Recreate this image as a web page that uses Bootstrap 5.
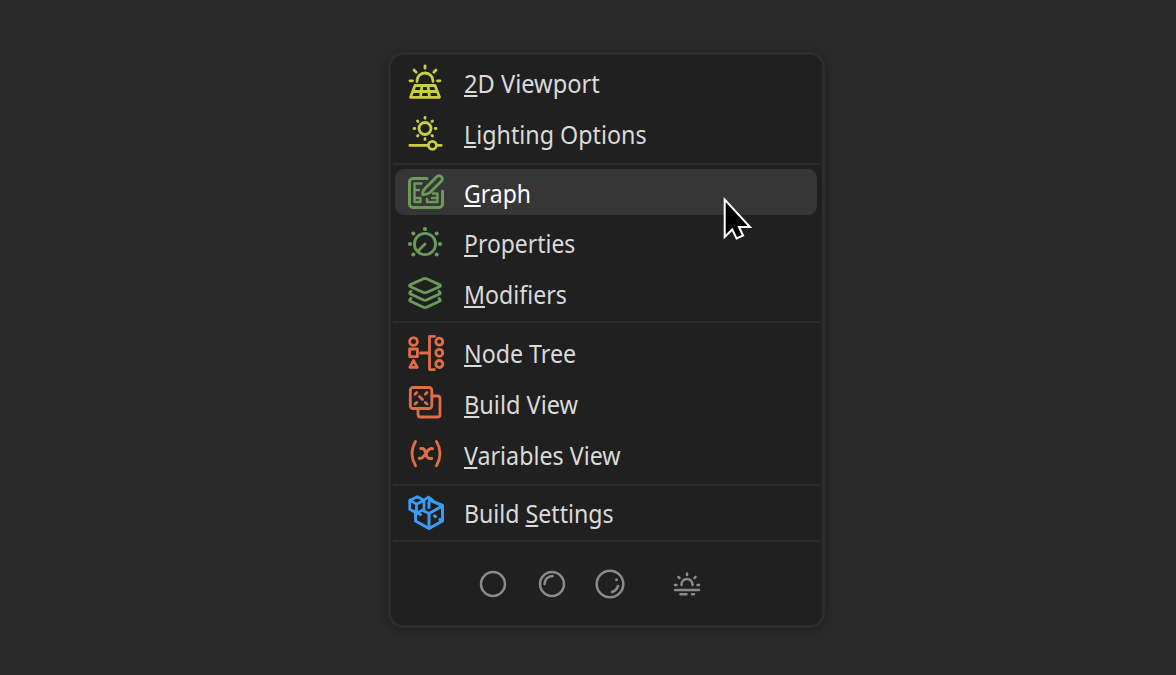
<!DOCTYPE html>
<html lang="en" data-bs-theme="dark">
<head>
<meta charset="utf-8">
<meta name="viewport" content="width=device-width, initial-scale=1">
<title>View menu</title>
<link href="https://cdn.jsdelivr.net/npm/bootstrap@5.3.0/dist/css/bootstrap.min.css" rel="stylesheet">
<style>
body{background:#2a2a2a;font-family:"Noto Sans","Open Sans",sans-serif;height:675px;overflow:hidden}
.stage{padding:52px 0 0 388px}
.panel-menu{width:437px;height:576px;background:#202020;border:3px solid #2d2d2d;border-radius:15px;box-shadow:0 2px 9px rgba(0,0,0,.25);padding-top:2px}
.entry{height:46px;margin:2.35px 5px 2.35px 3.500px;border-radius:9px;color:#dadada;font-size:25.4px;line-height:46px;padding-left:10px}
.entry-group{display:flow-root}
.entry-group .entry+.entry{margin-top:4.7px}
.entry.active{background:#363636;color:#fff}
.entry svg{width:40px;height:40px;flex:none;margin-top:1px}
.caption{margin-left:19px;transform-origin:0 50%;position:relative;top:1px}
.caption u{text-decoration-thickness:1.5px;text-underline-offset:1.500px;text-decoration-skip-ink:none}
.rule{height:2px;background:#2b2b2b;margin:4.500px 2px 1.500px}
.rule-b{margin-top:3px;margin-bottom:3.500px}
.rule-c{margin-top:4.500px;margin-bottom:1.500px}
.rule-d{margin-top:2.500px;margin-bottom:0}
.ic{fill:none;stroke:currentColor;stroke-width:2.8;stroke-linecap:round;stroke-linejoin:round}
.c-yellow{color:#c8cf43}.c-green{color:#6b9b58}.c-orange{color:#dd6e47}.c-blue{color:#3b9cf5}
.shades{height:83px;padding-left:85px;gap:24.500px;color:#8b8b8b}
.shades svg{width:34px;height:34px;stroke-width:2.5}
.shades svg:last-child{margin-left:18.300px}
.pointer{position:absolute;left:720px;top:194px}
</style>
</head>
<body>
<main class="stage">
<nav class="panel-menu">
<div class="entry-group">
<div class="entry d-flex align-items-center"><svg class="ic c-yellow" viewBox="0 0 40 40"><path d="M12 18.500v-.5a8 8 0 0 1 16 0v.5M20 2.800v2.400M9 7l2.200 2.200M31 7l-2.200 2.200M5 17.800h2.500M32.500 17.800H35M10 22.500h20l4.500 11.800h-29zM8 28.500h24M17 22.500 15.500 34.300M23 22.500 24.500 34.300"/></svg><span class="caption" data-w="136"><u>2</u>D Viewport</span></div>
<div class="entry d-flex align-items-center"><svg class="ic c-yellow" viewBox="0 0 40 40"><circle cx="20" cy="14.500" r="6"/><path d="M20 3.500v.8M20 24.700v.8M9 14.500h.8M30.200 14.500h.8M12.500 7l.5.5M27.500 7l-.5.5M12.500 22l.5-.5M27.500 22l-.5-.5M4.800 31.300h18M32 31.300h4.300"/><circle cx="27.400" cy="31.300" r="4"/></svg><span class="caption" data-w="182.500"><u>L</u>ighting Options</span></div>
</div>
<div class="rule"></div>
<div class="entry-group">
<div class="entry active d-flex align-items-center"><svg class="ic c-green" viewBox="0 0 40 40"><path d="M22 6.500H8a3.500 3.500 0 0 0-3.500 3.500v22A3.500 3.500 0 0 0 8 35.500h26a3.500 3.500 0 0 0 3.500-3.500V19" stroke-width="3"/><path d="M17.500 22.500c0-3 1-4.500 3-6.500L32 4.500a3.200 3.200 0 0 1 4.500 4.500L25 20.500c-2 1.600-4 2.300-7.500 2z"/><path d="M16.500 11.500h-7v18.500h6v-4h-6M9.500 18h4.500M32.500 21.500V30H22v-3M28 21.500h4.500M27 26h5.500" stroke-width="2.400"/></svg><span class="caption" data-w="67"><u>G</u>raph</span></div>
<div class="entry d-flex align-items-center"><svg class="ic c-green" viewBox="0 0 40 40"><circle cx="20" cy="21" r="10.600"/><path d="m20 21-6 6"/><g fill="currentColor" stroke="none"><circle cx="20" cy="6" r="2.100"/><circle cx="8.300" cy="10.500" r="2.100"/><circle cx="31.700" cy="10.500" r="2.100"/><circle cx="5" cy="21" r="2.100"/><circle cx="35" cy="21" r="2.100"/><circle cx="8.300" cy="31.500" r="2.100"/><circle cx="31.700" cy="31.500" r="2.100"/></g></svg><span class="caption" data-w="111"><u>P</u>roperties</span></div>
<div class="entry d-flex align-items-center"><svg class="ic c-green" viewBox="0 0 40 40"><path d="M5 10.900 18.500 4.800q1.500-.6 3 0L35 10.900q1 .8 0 1.600L21.500 18.500q-1.500.7-3 0L5 12.500q-1-.8 0-1.600zM6 17.300q-2 1.400-1 2.400L18.500 26q1.500.7 3 0L35 19.700q1-1-1-2.400M6 24.500q-2 1.400-1 2.400L18.500 33.300q1.500.7 3 0L35 26.900q1-1-1-2.400"/></svg><span class="caption" data-w="103"><u>M</u>odifiers</span></div>
</div>
<div class="rule rule-b"></div>
<div class="entry-group">
<div class="entry d-flex align-items-center"><svg class="ic c-orange" viewBox="0 0 40 40"><circle cx="8.500" cy="8.500" r="3.900"/><path d="M4.600 16h7.800v7.600H4.600zM8.500 27.500l3.700 6.800H4.800zM15.500 20h9M29.500 3.400h-5v33.200h5"/><circle cx="34.300" cy="8.700" r="3.500"/><circle cx="34.300" cy="19.800" r="3.500"/><circle cx="34.300" cy="31" r="3.500"/></svg><span class="caption" data-w="112.500"><u>N</u>ode Tree</span></div>
<div class="entry d-flex align-items-center"><svg class="ic c-orange" viewBox="0 0 40 40"><rect x="5.300" y="4.500" width="21.500" height="21" rx="2.800"/><path d="M27 13h5.500a2.500 2.500 0 0 1 2.500 2.500v16a2.500 2.500 0 0 1-2.500 2.500h-17a2.500 2.500 0 0 1-2.500-2.500V26M10 11.200l1.700-1.600M20.300 11.200l1.700-1.600M10 21l1.700-1.600M20.300 19.400l1.700 1.600M14.500 13.500l3 3"/></svg><span class="caption" data-w="114"><u>B</u>uild View</span></div>
<div class="entry d-flex align-items-center"><svg class="ic c-orange" viewBox="0 0 40 40"><path d="M10.500 7.500Q3.500 19.500 10.500 31.800M31.500 7.500Q38.500 19.500 31.500 31.800"/><path d="M15.800 14.500c2.300-.4 3.500.3 4.100 2.200l1.800 5.400c.7 2.200 2 2.800 5 2.300M27.500 14.700c-2.500-.5-3.800.6-5.300 2.800l-2.900 4c-1.500 2.200-2.800 3.300-5 2.800" stroke-width="3"/></svg><span class="caption" data-w="156.500"><u>V</u>ariables View</span></div>
</div>
<div class="rule rule-c"></div>
<div class="entry-group">
<div class="entry d-flex align-items-center"><svg class="ic c-blue" viewBox="0 0 40 40"><path d="M24.500 7 37.500 12.500v15.500L24 35.500 10.500 28V18M24 35.500V20.500l13.500-7.500M24 20.500l-6-3M24 9.500v5M29.500 23l1 .6M35 26.500l2 1.200M11 19.500l4.500 2" stroke-width="3"/><path d="m12.500 3.700 6.500 3.500v9l-7 4-7.300-4v-9zM5 7.200l6.500 4 7.500-4M11.500 11.200v8.500M19 7.200l4.500-3.200 4 3" stroke-width="2.700"/></svg><span class="caption" data-w="149.500">Build <u>S</u>ettings</span></div>
</div>
<div class="rule rule-d"></div>
<div class="shades d-flex align-items-center">
<svg class="ic" viewBox="0 0 34 34"><circle cx="17" cy="17" r="12"/></svg>
<svg class="ic" viewBox="0 0 34 34"><circle cx="17" cy="17" r="12"/><path d="M9.500 17a8 8 0 0 1 8-8"/></svg>
<svg class="ic" viewBox="0 0 34 34"><circle cx="17" cy="17" r="13.300"/><path d="M25 19q-1.500 4.500-6 6M23.500 12.500v.4"/></svg>
<svg class="ic" viewBox="0 0 34 34"><path d="M11.500 18v-.5a5.500 5.500 0 0 1 11 0v.5M17 6.500v1.500M8.500 10l1 1M25.500 10l-1 1M5 18h1.500M27.500 18H29M5 23h24M10.500 27.300h6M22 27.300h2"/></svg>
</div>
</nav>
</main>
<svg class="pointer" width="36" height="50" viewBox="0 0 36 50"><path d="M4.700 5.500V43l7.500-7.500L16.600 44.500l6.500-3-4.200-8.500H30z" fill="#000" stroke="#fff" stroke-width="2" stroke-linejoin="miter"/></svg>
<script src="https://cdn.jsdelivr.net/npm/bootstrap@5.3.0/dist/js/bootstrap.bundle.min.js"></script>
<script>
document.querySelectorAll('.caption').forEach(function(c){
  c.style.transform='scaleX('+(c.dataset.w/c.offsetWidth)+')';
});
</script>
</body>
</html>
